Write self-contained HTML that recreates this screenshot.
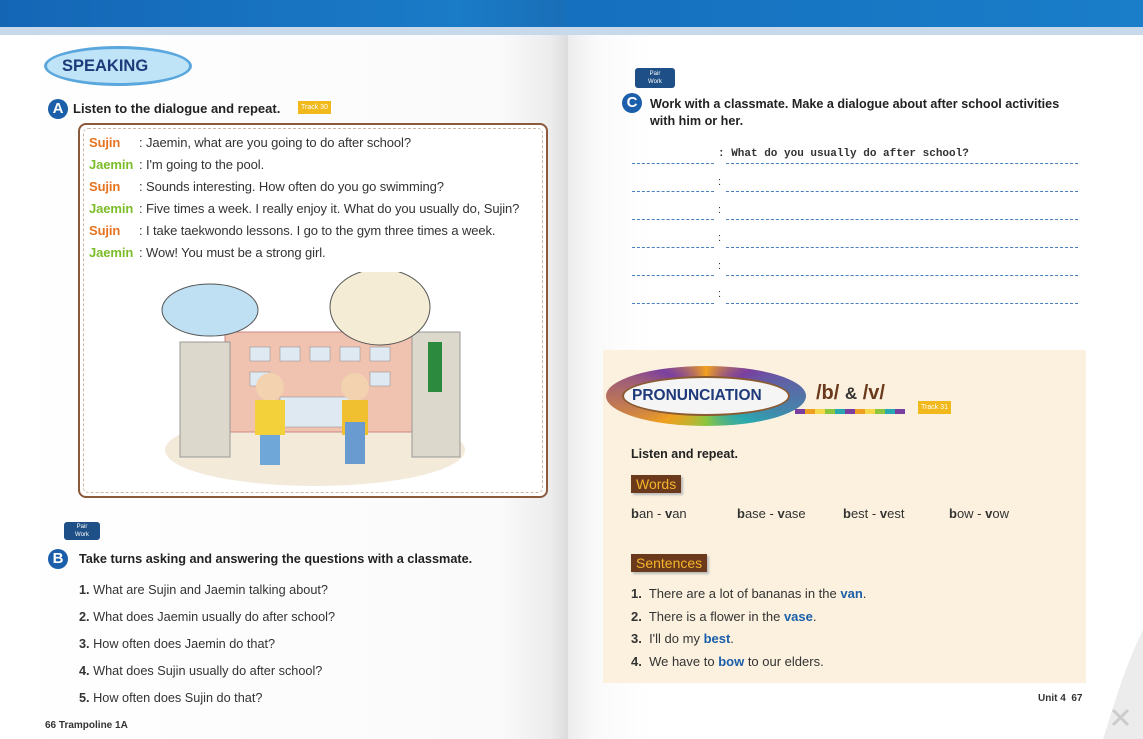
<!DOCTYPE html>
<html><head><meta charset="utf-8"><style>
*{margin:0;padding:0;box-sizing:border-box}
body{width:1143px;height:739px;overflow:hidden;position:relative;background:#fff;font-family:"Liberation Sans",sans-serif;color:#333}
.a{position:absolute}
.top{left:0;top:0;width:1143px;height:28px;background:linear-gradient(90deg,#1466b5,#1a7bc7 40%,#1a6fb8 49%,#1570bf 50%,#1a7ec9)}
.strip{left:0;top:27px;width:1143px;height:8px;background:#c9d9ec}
.lp{left:0;top:35px;width:568px;height:704px;background:linear-gradient(90deg,#fff 0,#fafafa 88%,#ececec 97%,#dcdcdc 100%)}
.rp{left:568px;top:35px;width:575px;height:704px;background:linear-gradient(90deg,#ececec,#fafafa 5%,#fff 15%)}
.circ{width:20px;height:20px;border-radius:50%;background:#1b5fab;color:#fff;font-weight:bold;font-size:15px;text-align:center;line-height:20px}
.h{font-weight:bold;font-size:13px;color:#222}
.dl{font-size:13px;line-height:22px;color:#333;letter-spacing:-0.1px}
.o{color:#e8731f;font-weight:bold;display:inline-block;width:50px}
.g{color:#7cbd2a;font-weight:bold;display:inline-block;width:50px}
.q{font-size:12.7px;color:#333}
.ln{border-bottom:1px dashed #4a7fc0;height:1px}
.tag{background:#6b3a1c;color:#f5b52a;font-size:14px;padding:1px 5px;box-shadow:2px 2px 2px #bbb}
.w{font-size:13px;color:#333}
.bl{color:#1b5fab;font-weight:bold}
</style></head><body>
<div class="a top"></div><div class="a strip"></div>
<div class="a lp"></div><div class="a rp"></div>

<!-- SPEAKING -->
<div class="a" style="left:44px;top:46px;width:148px;height:40px;border-radius:50%;background:#bfe3f7;border:3px solid #5aa7de"></div>
<div class="a" style="left:62px;top:57px;font-weight:bold;font-size:16.5px;color:#1e3a7a">SPEAKING</div>
<div class="a circ" style="left:48px;top:99px">A</div>
<div class="a h" style="left:73px;top:101px">Listen to the dialogue and repeat.</div>
<div class="a" style="left:298px;top:101px;background:#f2b91c;color:#fff;font-size:7px;padding:3px 3px">Track 30</div>

<div class="a" style="left:78px;top:123px;width:470px;height:375px;border:2px solid #8b5a3c;border-radius:8px;background:#fff"></div>
<div class="a" style="left:83px;top:128px;width:460px;height:365px;border:1px dashed #c9b8a8;border-radius:5px"></div>
<div class="a dl" style="left:89px;top:132px">
<div><span class="o">Sujin</span>: Jaemin, what are you going to do after school?</div>
<div><span class="g">Jaemin</span>: I'm going to the pool.</div>
<div><span class="o">Sujin</span>: Sounds interesting. How often do you go swimming?</div>
<div><span class="g">Jaemin</span>: Five times a week. I really enjoy it. What do you usually do, Sujin?</div>
<div><span class="o">Sujin</span>: I take taekwondo lessons. I go to the gym three times a week.</div>
<div><span class="g">Jaemin</span>: Wow! You must be a strong girl.</div>
</div>
<!-- illustration -->
<svg class="a" style="left:150px;top:272px" width="330" height="215">
<ellipse cx="165" cy="178" rx="150" ry="36" fill="#f3ead9"/>
<rect x="75" y="60" width="190" height="100" fill="#f0c2b0"/>
<rect x="75" y="60" width="190" height="100" fill="none" stroke="#c88"/>
<g fill="#dfe9f2" stroke="#888" stroke-width=".5">
<rect x="100" y="75" width="20" height="14"/><rect x="130" y="75" width="20" height="14"/><rect x="160" y="75" width="20" height="14"/><rect x="190" y="75" width="20" height="14"/><rect x="220" y="75" width="20" height="14"/>
<rect x="100" y="100" width="20" height="14"/><rect x="220" y="100" width="20" height="14"/><rect x="130" y="125" width="80" height="30"/></g>
<rect x="30" y="70" width="50" height="115" fill="#ddd8cc" stroke="#999"/>
<rect x="262" y="60" width="48" height="125" fill="#ddd8cc" stroke="#999"/>
<rect x="278" y="70" width="14" height="50" fill="#2b8a3e"/>
<ellipse cx="60" cy="38" rx="48" ry="26" fill="#bfe0f2" stroke="#555"/>
<ellipse cx="230" cy="35" rx="50" ry="38" fill="#f5ecd6" stroke="#555"/>
<circle cx="120" cy="115" r="14" fill="#f3d2b0"/><rect x="105" y="128" width="30" height="35" fill="#f2d13a"/><rect x="110" y="163" width="20" height="30" fill="#6fa8d8"/>
<circle cx="205" cy="115" r="14" fill="#f3d2b0"/><rect x="192" y="128" width="26" height="35" fill="#f0c030"/><rect x="195" y="150" width="20" height="42" fill="#6a9bd0"/>
</svg>

<!-- Pair work B -->
<div class="a" style="left:64px;top:522px;width:36px;height:18px;background:#1e4f86;border-radius:3px;color:#fff;font-size:6px;text-align:center;line-height:8px;padding-top:1px">Pair<br>Work</div>
<div class="a circ" style="left:48px;top:549px">B</div>
<div class="a h" style="left:79px;top:552px;font-size:12.7px">Take turns asking and answering the questions with a classmate.</div>
<div class="a q" style="left:79px;top:577px;line-height:27px">
<div><b>1.</b> What are Sujin and Jaemin talking about?</div>
<div><b>2.</b> What does Jaemin usually do after school?</div>
<div><b>3.</b> How often does Jaemin do that?</div>
<div><b>4.</b> What does Sujin usually do after school?</div>
<div><b>5.</b> How often does Sujin do that?</div>
</div>
<div class="a" style="left:45px;top:720px;font-size:10px;font-weight:bold;color:#333">66 Trampoline 1A</div>

<!-- C -->
<div class="a" style="left:635px;top:68px;width:40px;height:20px;background:#1e4f86;border-radius:3px;color:#fff;font-size:6px;text-align:center;line-height:8px;padding-top:2px">Pair<br>Work</div>
<div class="a circ" style="left:622px;top:93px">C</div>
<div class="a h" style="left:650px;top:96px;line-height:17px;font-size:12.6px">Work with a classmate. Make a dialogue about after school activities<br>with him or her.</div>
<div class="a" style="left:632px;top:146px;width:448px">
<div style="position:relative;height:28px"><div class="a ln" style="left:0;top:17px;width:82px"></div><span class="a" style="left:86px;top:2px;font-size:11px;font-family:'Liberation Mono',monospace;font-weight:bold">: What do you usually do after school?</span><div class="a ln" style="left:94px;top:17px;width:352px"></div></div>
<div style="position:relative;height:28px"><div class="a ln" style="left:0;top:17px;width:82px"></div><span class="a" style="left:86px;top:2px;font-size:11px">:</span><div class="a ln" style="left:94px;top:17px;width:352px"></div></div>
<div style="position:relative;height:28px"><div class="a ln" style="left:0;top:17px;width:82px"></div><span class="a" style="left:86px;top:2px;font-size:11px">:</span><div class="a ln" style="left:94px;top:17px;width:352px"></div></div>
<div style="position:relative;height:28px"><div class="a ln" style="left:0;top:17px;width:82px"></div><span class="a" style="left:86px;top:2px;font-size:11px">:</span><div class="a ln" style="left:94px;top:17px;width:352px"></div></div>
<div style="position:relative;height:28px"><div class="a ln" style="left:0;top:17px;width:82px"></div><span class="a" style="left:86px;top:2px;font-size:11px">:</span><div class="a ln" style="left:94px;top:17px;width:352px"></div></div>
<div style="position:relative;height:28px"><div class="a ln" style="left:0;top:17px;width:82px"></div><span class="a" style="left:86px;top:2px;font-size:11px">:</span><div class="a ln" style="left:94px;top:17px;width:352px"></div></div>
</div>

<!-- Pronunciation box -->
<div class="a" style="left:603px;top:350px;width:483px;height:333px;background:#fbf1de"></div>
<div class="a" style="left:606px;top:366px;width:200px;height:60px;border-radius:50%;background:conic-gradient(#f0a020,#7a3fa0,#2aa8b0,#8cc63f,#f0a020,#7a3fa0,#f0a020)"></div>
<div class="a" style="left:622px;top:376px;width:168px;height:40px;border-radius:50%;background:#f5f5f5;border:2px solid #8a5a30"></div>
<div class="a" style="left:632px;top:387px;font-weight:bold;font-size:15.5px;color:#1e3a7a">PRONUNCIATION</div>
<div class="a" style="left:795px;top:409px;width:110px;height:5px;background:repeating-linear-gradient(90deg,#7a3fa0 0 10px,#f0a020 10px 20px,#f5d84a 20px 30px,#8cc63f 30px 40px,#2aa8b0 40px 50px)"></div>
<div class="a" style="left:816px;top:382px;font-size:20px;font-weight:bold;color:#6b3a1c">/b/ <span style="color:#333;font-size:17px">&amp;</span> /v/</div>
<div class="a" style="left:918px;top:401px;background:#f2b91c;color:#fff;font-size:7px;padding:3px 3px">Track 31</div>
<div class="a h" style="left:631px;top:447px;font-size:12.5px">Listen and repeat.</div>
<div class="a tag" style="left:631px;top:475px">Words</div>
<div class="a w" style="left:631px;top:506px"><b>b</b>an - <b>v</b>an</div>
<div class="a w" style="left:737px;top:506px"><b>b</b>ase - <b>v</b>ase</div>
<div class="a w" style="left:843px;top:506px"><b>b</b>est - <b>v</b>est</div>
<div class="a w" style="left:949px;top:506px"><b>b</b>ow - <b>v</b>ow</div>
<div class="a tag" style="left:631px;top:554px">Sentences</div>
<div class="a w" style="left:631px;top:583px;line-height:22.5px">
<div><b>1.</b>&nbsp; There are a lot of bananas in the <span class="bl">van</span>.</div>
<div><b>2.</b>&nbsp; There is a flower in the <span class="bl">vase</span>.</div>
<div><b>3.</b>&nbsp; I'll do my <span class="bl">best</span>.</div>
<div><b>4.</b>&nbsp; We have to <span class="bl">bow</span> to our elders.</div>
</div>
<div class="a" style="left:1038px;top:693px;font-size:10px;font-weight:bold;color:#333">Unit 4 &nbsp;67</div>
<svg class="a" style="left:1083px;top:630px" width="60" height="109"><path d="M60 0 L60 109 L20 109 C30 80 40 40 60 0Z" fill="#ececec"/><path d="M30 95 L45 80 M30 80 L45 95" stroke="#ccc" stroke-width="3"/></svg>
</body></html>
